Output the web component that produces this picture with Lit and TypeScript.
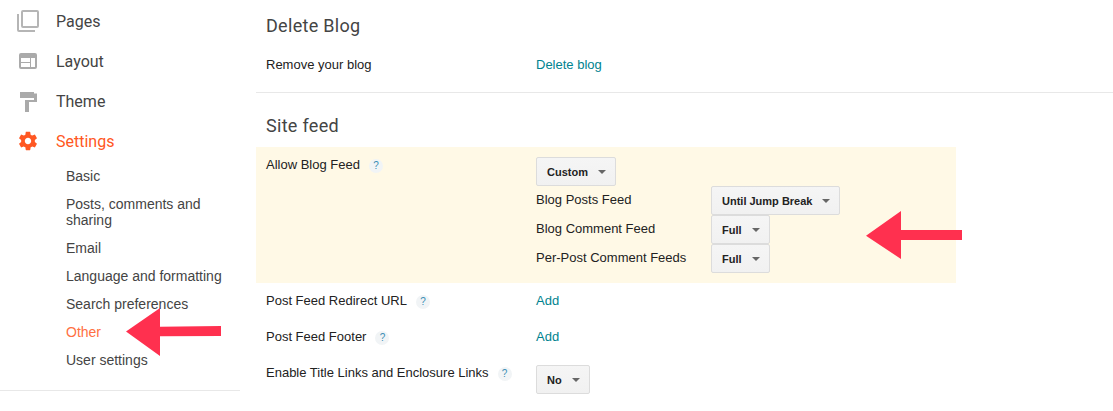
import { LitElement, html, css } from "lit";
import { customElement } from "lit/decorators.js";

const q = html`<span class="q">?</span>`;
const dd = (t: string) => html`<button class="dd">${t}<i></i></button>`;

@customElement("app-root")
export class AppRoot extends LitElement {
  static styles = css`
    :host { display: block; width: 1113px; height: 411px; overflow: hidden; position: relative; background: #fff; font-family: "Liberation Sans", Arial, sans-serif; color: #222; }
    .page { display: flex; height: 411px; }
    .side { width: 240px; flex: none; }
    .nav { display: flex; align-items: center; height: 40px; font: 16px Roboto, sans-serif; color: #444; }
    .nav.on { color: #ff5722; }
    .ico { width: 56px; flex: none; display: flex; justify-content: center; }
    .ico svg { display: block; }
    .first { margin-top: 1px; }
    .sub { display: flex; flex-direction: column; padding: 1px 0 0 66px; font-size: 14px; line-height: 16px; color: #444; }
    .sub a { padding: 6px 0; display: block; }
    .sub a.on { color: #ff7043; }
    .sub a.two { width: 150px; }
    .rule { height: 1px; background: #e8e8e8; margin-top: 16px; }
    .main { flex: 1; padding: 16px 0 0 16px; min-width: 0; }
    h2 { margin: 0; font: 400 18px/20px Roboto, sans-serif; color: #444; padding-left: 10px; letter-spacing: .3px; }
    .row { display: grid; grid-template-columns: 270px 1fr; padding: 0 10px; font-size: 13px; line-height: 16px; width: 680px; }
    .lab { display: flex; align-items: flex-start; gap: 9px; }
    a.link { color: #00838f; }
    .top21 { margin-top: 21px; }
    .top20 { margin-top: 20px; }
    .top10 { margin-top: 10px; }
    .q { width: 14px; height: 14px; border-radius: 50%; background: #f1f4f6; color: #3b8fb5; font-size: 10px; line-height: 14px; text-align: center; margin-top: 2px; }
    .hr { height: 1px; background: #e8e8e8; margin: 19px 0 23px; }
    .row.hl { background: #fff9e6; padding-top: 10px; padding-bottom: 10px; width: 700px; height: 136px; box-sizing: border-box; margin-top: 11px; }
    .feeds { display: grid; grid-template-columns: 175px auto; justify-content: start; justify-items: start; align-items: start; }
    .feeds span { padding-top: 6px; }
    .feeds .wide { grid-column: 1 / 3; }
    .dd { display: inline-flex; align-items: center; height: 29px; box-sizing: border-box; padding: 0 9px 0 10px; border: 1px solid #dcdcdc; border-radius: 2px; background: linear-gradient(#f5f5f5, #f1f1f1); font: 700 11px "Liberation Sans", Arial, sans-serif; color: #222; }
    .dd i { width: 0; height: 0; margin-left: 10px; border: 4px solid transparent; border-top-color: #666; border-bottom: 0; }
    .arrow { position: absolute; }
    .a1 { left: 126px; top: 307px; }
    .a2 { left: 866px; top: 211px; }
  `;

  render() {
    return html`
      <div class="page">
        <div class="side">
          <div class="nav first"><div class="ico"><svg width="22" height="22" viewBox="0 0 22 22" fill="none" stroke="#b5b5b5" stroke-width="2"><rect x="5" y="1" width="16" height="16" rx="1"/><path d="M1 4v16a1 1 0 0 0 1 1h16"/></svg></div>Pages</div>
          <div class="nav"><div class="ico"><svg width="18" height="16" viewBox="0 0 18 16"><path fill="#aaa" fill-rule="evenodd" d="M2 0h14a2 2 0 0 1 2 2v12a2 2 0 0 1-2 2H2a2 2 0 0 1-2-2V2a2 2 0 0 1 2-2zM2 5h9v4H2zM2 10h9v4H2zM12 5h4v9h-4z"/></svg></div>Layout</div>
          <div class="nav"><div class="ico"><svg width="18" height="22" viewBox="0 0 18 22"><path fill="#aaa" d="M1 2h14v6H1zM15 3.500h3V12H10v10H6V10h9z"/></svg></div>Theme</div>
          <div class="nav on"><div class="ico"><svg width="22" height="22" viewBox="0 0 24 24"><path fill="#ff5722" d="M19.430 12.980c.04-.32.07-.64.070-.98s-.03-.66-.07-.98l2.110-1.650c.19-.15.240-.42.120-.64l-2-3.460c-.12-.22-.39-.3-.61-.22l-2.490 1c-.52-.4-1.080-.73-1.690-.98l-.38-2.650A.488.488 0 0 0 14 2h-4c-.25 0-.46.180-.49.420l-.38 2.650c-.61.250-1.170.590-1.690.980l-2.490-1c-.23-.090-.49 0-.61.220l-2 3.460c-.13.220-.07.490.12.640l2.110 1.650c-.04.320-.07.650-.07.980s.03.660.07.980l-2.110 1.650c-.19.150-.24.420-.12.640l2 3.460c.12.220.39.300.61.220l2.490-1c.52.400 1.080.730 1.690.980l.38 2.650c.03.240.24.420.49.420h4c.25 0 .46-.18.49-.42l.38-2.650c.61-.25 1.170-.59 1.690-.98l2.490 1c.23.090.49 0 .61-.22l2-3.460c.12-.22.070-.49-.12-.64l-2.110-1.650zM12 15.500c-1.930 0-3.500-1.570-3.500-3.500s1.570-3.500 3.500-3.500 3.500 1.570 3.500 3.500-1.570 3.500-3.500 3.500z"/></svg></div>Settings</div>
          <div class="sub">
            <a>Basic</a>
            <a class="two">Posts, comments and sharing</a>
            <a>Email</a>
            <a>Language and formatting</a>
            <a>Search preferences</a>
            <a class="on">Other</a>
            <a>User settings</a>
          </div>
          <div class="rule"></div>
        </div>
        <div class="main">
          <h2>Delete Blog</h2>
          <div class="row top21"><div class="lab">Remove your blog</div><a class="link">Delete blog</a></div>
          <div class="hr"></div>
          <h2>Site feed</h2>
          <div class="row hl">
            <div class="lab">Allow Blog Feed ${q}</div>
            <div class="feeds">
              <div class="wide">${dd("Custom")}</div>
              <span>Blog Posts Feed</span>${dd("Until Jump Break")}
              <span>Blog Comment Feed</span>${dd("Full")}
              <span>Per-Post Comment Feeds</span>${dd("Full")}
            </div>
          </div>
          <div class="row top10"><div class="lab">Post Feed Redirect URL ${q}</div><a class="link">Add</a></div>
          <div class="row top20"><div class="lab">Post Feed Footer ${q}</div><a class="link">Add</a></div>
          <div class="row top20"><div class="lab">Enable Title Links and Enclosure Links ${q}</div><div>${dd("No")}</div></div>
        </div>
      </div>
      <svg class="arrow a1" width="96" height="50" viewBox="0 0 96 50"><path fill="#ff304f" d="M0 24.500 34 1V19.700L95 19V29L34 29.300V49Z"/></svg>
      <svg class="arrow a2" width="96" height="50" viewBox="0 0 96 50"><path fill="#ff304f" d="M0 24.700 35 0V19H96V29H35V48Z"/></svg>
    `;
  }
}
